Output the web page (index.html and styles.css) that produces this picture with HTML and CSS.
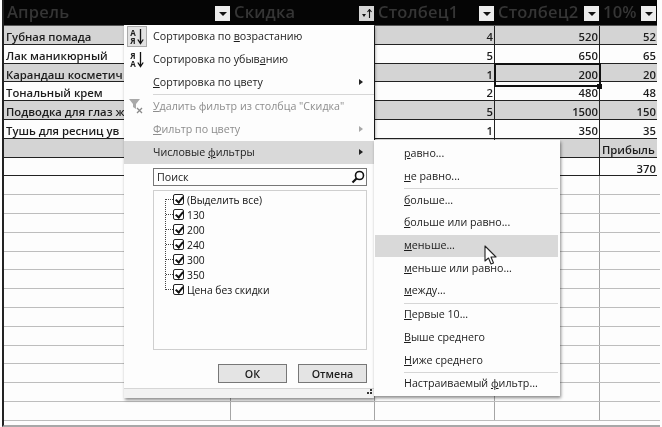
FILE: index.html
```html
<!DOCTYPE html>
<html lang="ru">
<head>
<meta charset="utf-8">
<title>Числовые фильтры</title>
<link rel="stylesheet" href="styles.css">
</head>
<body>
<div class="sheet">
  <div class="row head">
    <div class="hc">Апрель<span class="drop"><i class="tri"></i></span></div>
    <div class="hc">Скидка<span class="drop active"><i class="tri small"></i><svg class="up" width="5" height="9" viewBox="0 0 5 9"><path d="M2.5 9V1M.5 3l2-2.500 2 2.500" fill="none" stroke="#111" stroke-width="1.100"/></svg></span></div>
    <div class="hc">Столбец1<span class="drop"><i class="tri"></i></span></div>
    <div class="hc">Столбец2<span class="drop"><i class="tri"></i></span></div>
    <div class="hc">10%<span class="drop"><i class="tri"></i></span></div>
  </div>
  <div class="row data band"><div class="name">Губная помада</div><div></div><div>4</div><div>520</div><div>52</div></div>
  <div class="row data"><div class="name">Лак маникюрный</div><div></div><div>5</div><div>650</div><div>65</div></div>
  <div class="row data band"><div class="name">Карандаш косметич</div><div></div><div>1</div><div class="selected">200</div><div>20</div></div>
  <div class="row data"><div class="name">Тональный крем</div><div></div><div>2</div><div>480</div><div>48</div></div>
  <div class="row data band"><div class="name">Подводка для глаз ж</div><div></div><div>5</div><div>1500</div><div>150</div></div>
  <div class="row data"><div class="name">Тушь для ресниц ув</div><div></div><div>1</div><div>350</div><div>35</div></div>
  <div class="row data band"><div></div><div></div><div></div><div></div><div class="label">Прибыль</div></div>
  <div class="row data"><div></div><div></div><div></div><div></div><div>370</div></div>
  <div class="row"><div></div><div></div><div></div><div></div><div></div></div>
  <div class="row"><div></div><div></div><div></div><div></div><div></div></div>
  <div class="row"><div></div><div></div><div></div><div></div><div></div></div>
  <div class="row"><div></div><div></div><div></div><div></div><div></div></div>
  <div class="row"><div></div><div></div><div></div><div></div><div></div></div>
  <div class="row"><div></div><div></div><div></div><div></div><div></div></div>
  <div class="row"><div></div><div></div><div></div><div></div><div></div></div>
  <div class="row"><div></div><div></div><div></div><div></div><div></div></div>
  <div class="row"><div></div><div></div><div></div><div></div><div></div></div>
  <div class="row"><div></div><div></div><div></div><div></div><div></div></div>
  <div class="row"><div></div><div></div><div></div><div></div><div></div></div>
  <div class="row"><div></div><div></div><div></div><div></div><div></div></div>
  <div class="row"><div></div><div></div><div></div><div></div><div></div></div>
</div>

<div class="menu main">
  <div class="item sorted">
    <span class="sorticon boxed"><span class="az">А<br>Я</span><svg width="7" height="16" viewBox="0 0 7 16"><path d="M3.500 0v14M.8 10.500l2.700 4 2.700-4" fill="none" stroke="#111" stroke-width="1.300"/></svg></span>
    <span>Сортировка по <u>в</u>озрастанию</span>
  </div>
  <div class="item">
    <span class="sorticon"><span class="az">Я<br>А</span><svg width="7" height="16" viewBox="0 0 7 16"><path d="M3.500 0v14M.8 10.500l2.700 4 2.700-4" fill="none" stroke="#111" stroke-width="1.300"/></svg></span>
    <span>Сортировка по убыв<u>а</u>нию</span>
  </div>
  <div class="item"><span><u>С</u>ортировка по цвету</span><i class="arrow"></i></div>
  <div class="sep"></div>
  <div class="item off">
    <svg class="funnel" width="17" height="16" viewBox="0 0 17 16"><path d="M1 1h11L8 6v5L5 9V6z" fill="#a9a9a9"/><path d="M9 10l5 5M14 10l-5 5" stroke="#8a8a8a" stroke-width="1.300"/></svg>
    <span><u>У</u>далить фильтр из столбца "Скидка"</span>
  </div>
  <div class="item off"><span><u>Ф</u>ильтр по цвету</span><i class="arrow"></i></div>
  <div class="item hover"><span>Числовые <u>ф</u>ильтры</span><i class="arrow"></i></div>
  <div class="search">
    <span>Поиск</span>
    <svg width="14" height="14" viewBox="0 0 14 14"><circle cx="8.500" cy="5.500" r="4" fill="none" stroke="#111" stroke-width="1.600"/><path d="M5.500 8.500L1.500 12.500" stroke="#111" stroke-width="2.200"/></svg>
  </div>
  <div class="tree">
    <div class="rail"></div>
    <div class="leaf"><span class="check"></span>(Выделить все)</div>
    <div class="leaf"><span class="check"></span>130</div>
    <div class="leaf"><span class="check"></span>200</div>
    <div class="leaf"><span class="check"></span>240</div>
    <div class="leaf"><span class="check"></span>300</div>
    <div class="leaf"><span class="check"></span>350</div>
    <div class="leaf"><span class="check"></span>Цена без скидки</div>
  </div>
  <div class="buttons">
    <div class="btn">ОК</div>
    <div class="btn">Отмена</div>
  </div>
  <div class="grip">
    <svg width="7" height="7" viewBox="0 0 7 7"><path d="M5 0h2v2H5zM2 3h2v2H2zM5 3h2v2H5z" fill="#333"/></svg>
  </div>
</div>

<div class="menu sub">
  <div class="item"><span><u>р</u>авно...</span></div>
  <div class="item"><span><u>н</u>е равно...</span></div>
  <div class="sep"></div>
  <div class="item"><span><u>б</u>ольше...</span></div>
  <div class="item"><span><u>б</u>ольше или равно...</span></div>
  <div class="item hover"><span><u>м</u>еньше...</span></div>
  <div class="item"><span><u>м</u>еньше или равно...</span></div>
  <div class="item"><span><u>м</u>ежду...</span></div>
  <div class="sep"></div>
  <div class="item"><span><u>П</u>ервые 10...</span></div>
  <div class="item"><span><u>В</u>ыше среднего</span></div>
  <div class="item"><span><u>Н</u>иже среднего</span></div>
  <div class="sep"></div>
  <div class="item"><span>Настраиваемый <u>ф</u>ильтр...</span></div>
</div>

<svg class="cursor" width="15" height="21" viewBox="0 0 15 21"><path d="M1 1v15l3.500-3 2.500 6 2.500-1-2.500-6h5z" fill="#fff" stroke="#222" stroke-width="1.100" stroke-linejoin="round"/></svg>
</body>
</html>
```

FILE: styles.css
```css
* { box-sizing: border-box; }
html, body { margin: 0; height: 427px; overflow: hidden; background: #fdfdfd; }
body { font-family: "Open Sans", "Noto Sans", sans-serif; font-size: 10.700px; color: #1c1c1c; position: relative; filter: blur(.35px); }

.sheet { margin-left: 2px; width: 658px; border-left: 2px solid #222; height: 427px; border-bottom: 2px solid #a8a8a8; overflow: hidden; }

.row { display: grid; grid-template-columns: 227px 144px 120px 105px 1fr; height: 18.8px; border-bottom: 1px solid #bdbdbd; }
.row > div { border-right: 1px solid #a5a5a5; }
.row > div:last-child { border-right: 0; }

.head { height: 26px; margin-right: 3px; background: #050505; border-bottom: 1px solid #555; }
.row .hc { display: flex; justify-content: space-between; align-items: center; padding: 0 1px 3px 3px; font-size: 16.500px; font-weight: 600; letter-spacing: .2px; color: #353535; border: 0; white-space: nowrap; }
.drop { width: 15px; height: 15px; background: #ececec; display: flex; align-items: center; justify-content: center; gap: 1px; flex: none; margin-top: 4px; }
.drop.active { background: #d5d5d5; }
.tri { border: 4px solid transparent; border-top: 4px solid #111; border-bottom: 0; }
.tri.small { border-width: 3px 2.500px 0; margin-top: 4px; }

.data { margin-right: 3px; border-bottom: 1px solid #222; font-size: 11.300px; font-weight: 600; line-height: 22px; text-align: right; }
.band { background: #d4d4d4; }
.row.data > div { border-right: 1px solid #222; padding-right: 1px; white-space: nowrap; overflow: hidden; }
.row.data > div:last-child { border-right: 0; }
.row.data .name { text-align: left; padding-left: 2px; }
.row.data .selected { outline: 2px solid #111; outline-offset: -1px; overflow: visible; position: relative; }
.selected::after { content: ""; position: absolute; right: -3px; bottom: -3px; width: 5px; height: 5px; background: #111; }
.row.data .label { text-align: left; padding-left: 2px; }

.menu { position: absolute; background: #fdfdfd; display: flex; flex-direction: column; box-shadow: 1px 2px 3px rgba(0,0,0,.45); }
.main { left: 124px; top: 25px; width: 250px; height: 373px; }
.sub { left: 374px; top: 140px; width: 186px; height: 256px; padding: 3px 2px 0 1px; }

.item { height: 23px; flex: none; display: flex; align-items: center; padding: 0 0 2px 29px; position: relative; }
.sub .item { height: 22.700px; padding-left: 29px; }
.item.hover { background: #d9d9d9; }
.item.off { color: #8d8d8d; }
.sep { height: 1px; flex: none; background: #d6d6d6; margin-left: 29px; }

.arrow { position: absolute; right: 11px; top: 8px; border: 3.500px solid transparent; border-left: 4px solid #222; border-right: 0; }
.off .arrow { border-left-color: #a8a8a8; }

.sorticon { position: absolute; left: 3px; top: 1px; width: 20px; height: 21px; display: flex; align-items: center; justify-content: center; gap: 1px; }
.boxed { background: #e2e2e2; border: 1px solid #aaa; }
.az { font-size: 8px; line-height: 8px; font-weight: 700; text-align: center; }
.funnel { position: absolute; left: 4px; top: 3px; }

.search { height: 18px; margin: 4px 7px 0 29px; flex: none; border: 1px solid #777; display: flex; align-items: center; justify-content: space-between; padding: 0 1px 0 3px; }
.tree { position: relative; height: 160px; flex: none; margin: 4px 7px 0 29px; border: 1px solid #cfcfcf; padding: 1px 0 0 19px; color: #111; font-size: 10.300px; }
.rail { position: absolute; left: 11px; top: 8px; height: 91px; border-left: 1px dotted #444; }
.leaf { height: 15px; display: flex; align-items: center; gap: 3px; white-space: nowrap; position: relative; }
.leaf::before { content: ""; position: absolute; left: -7px; top: 7px; width: 7px; border-top: 1px dotted #444; }
.check { width: 11px; height: 11px; border: 1px solid #222; border-radius: 2px; background: #fff; position: relative; flex: none; }
.check::after { content: ""; position: absolute; left: 2.500px; top: 0; width: 3px; height: 6px; border: solid #111; border-width: 0 2px 2px 0; transform: rotate(40deg); }

.buttons { display: flex; justify-content: flex-end; gap: 11px; margin: 14px 7px 0 0; flex: none; }
.btn { width: 69px; height: 19px; background: #e4e4e4; border: 1px solid #777; display: flex; align-items: center; justify-content: center; font-weight: 600; }

.grip { margin-top: 5px; flex: 1; border-top: 1px solid #d6d6d6; background: #f2f2f2; display: flex; justify-content: flex-end; align-items: flex-end; padding: 0 2px 2px 0; }

.cursor { position: absolute; left: 484px; top: 245px; }
```
